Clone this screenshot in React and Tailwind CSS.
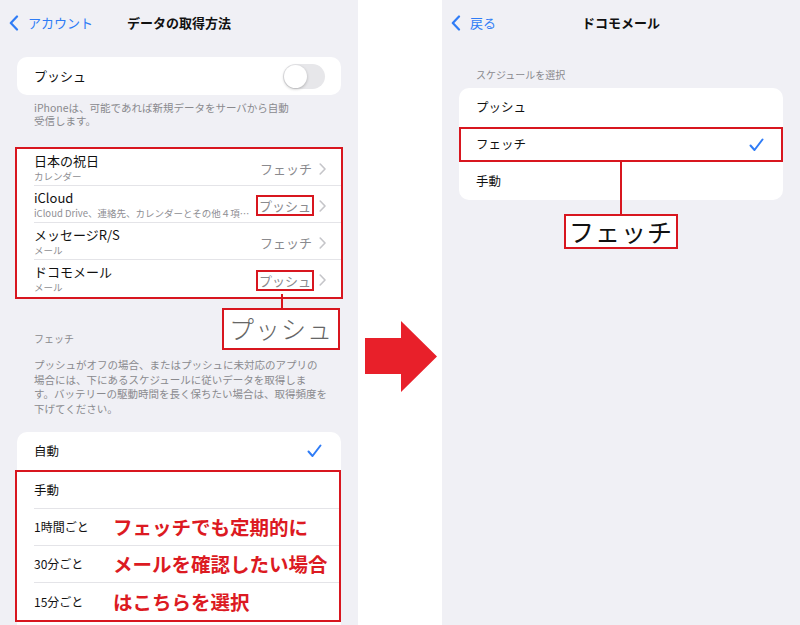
import React from 'react';

const font = { fontFamily: '"Noto Sans CJK JP", "Noto Sans", sans-serif' };

function BackChevron() {
  return (
    <svg width="10" height="16" viewBox="0 0 10 16" fill="none">
      <path d="M8 1.5L1.8 8L8 14.5" stroke="#2f7cf6" strokeWidth="2.2" strokeLinecap="round" strokeLinejoin="round" />
    </svg>
  );
}

function RowChevron() {
  return (
    <svg width="7" height="12" viewBox="0 0 7 12" fill="none">
      <path d="M1.2 1L6 6L1.2 11" stroke="#c5c5c9" strokeWidth="1.6" strokeLinecap="round" strokeLinejoin="round" />
    </svg>
  );
}

function Check() {
  return (
    <svg width="15" height="14" viewBox="0 0 15 14" fill="none">
      <path d="M1.5 7.5L5.5 12L13.5 1.5" stroke="#2f7cf6" strokeWidth="2" strokeLinecap="round" strokeLinejoin="round" />
    </svg>
  );
}

function Header({ back, title }) {
  return (
    <div className="grid grid-cols-[1fr_auto_1fr] items-center h-[46px]">
      <div className="flex items-center gap-[9px] pl-[9px] text-[13px] text-[#2f7cf6]">
        <BackChevron />
        <span>{back}</span>
      </div>
      <div className="text-[13px] font-bold text-[#111]">{title}</div>
      <div />
    </div>
  );
}

const accounts = [
  { title: '日本の祝日', sub: 'カレンダー', value: 'フェッチ' },
  { title: 'iCloud', sub: 'iCloud Drive、連絡先、カレンダーとその他４項目...', value: 'プッシュ', boxed: true },
  { title: 'メッセージR/S', sub: 'メール', value: 'フェッチ' },
  { title: 'ドコモメール', sub: 'メール', value: 'プッシュ', boxed: true, last: true },
];

const schedule = [
  { label: '1時間ごと', note: 'フェッチでも定期的に' },
  { label: '30分ごと', note: 'メールを確認したい場合' },
  { label: '15分ごと', note: 'はこちらを選択', last: true },
];

function LeftPanel() {
  return (
    <div className="w-[358px] h-[625px] bg-[#f0f0f5] overflow-hidden flex flex-col">
      <Header back="アカウント" title="データの取得方法" />

      <div className="mt-[11px] mx-[17px] h-[38px] bg-white rounded-[10px] flex items-center justify-between pl-[17px] pr-[16px]">
        <span className="text-[13px] text-[#111]">プッシュ</span>
        <div className="w-[42px] h-[25px] rounded-full bg-[#e7e7ea] p-[1px] flex items-center">
          <div className="w-[23px] h-[23px] rounded-full bg-white shadow-[0_1px_3px_rgba(0,0,0,0.25)]" />
        </div>
      </div>

      <p className="mt-[6px] px-[34px] text-[10.5px] leading-[13px] text-[#8a8a8e]">
        iPhoneは、可能であれば新規データをサーバから自動<br />受信します。
      </p>

      <div className="relative mt-[20px] mx-[15px] border-2 border-[#d8161f] bg-white">
        {accounts.map((a) => (
          <div key={a.title} className="pl-[17px]">
            <div className={`h-[37px] flex items-center pr-[15px] ${a.last ? '' : 'border-b border-[#e4e4e8]'}`}>
              <div className="flex-1 min-w-0 flex flex-col">
                <span className="text-[13px] leading-[17px] text-[#111]">{a.title}</span>
                <span className="text-[9.5px] leading-[14px] text-[#8e8e93] truncate">{a.sub}</span>
              </div>
              <span
                className={`text-[13px] leading-[17px] text-[#8a8a8e] mt-[3px] ${
                  a.boxed ? 'border-2 border-[#d8161f] px-[1px] -mr-[1px] bg-white' : 'pr-[1px]'
                }`}
              >
                {a.value}
              </span>
              <span className="ml-[6px] mt-[3px] flex items-center">
                <RowChevron />
              </span>
            </div>
          </div>
        ))}
        {/* callout for push */}
        <div className="absolute left-[264px] top-[145px] w-[2px] h-[14px] bg-[#d8161f]" />
        <div className="absolute left-[205px] top-[159px] w-[118px] h-[42px] border-2 border-[#d8161f] bg-white flex items-center justify-center">
          <span className="text-[25px] font-light text-[#666] tracking-[1px]">プッシュ</span>
        </div>
      </div>

      <div className="mt-[34px] px-[34px] text-[10px] leading-[12px] text-[#8a8a8e]">フェッチ</div>
      <p className="mt-[13px] pl-[34px] pr-[26px] text-[10.5px] leading-[14.5px] text-[#8a8a8e]">
        プッシュがオフの場合、またはプッシュに未対応のアプリの<br />
        場合には、下にあるスケジュールに従いデータを取得しま<br />
        す。バッテリーの駆動時間を長く保ちたい場合は、取得頻度を<br />
        下げてください。
      </p>

      <div className="mt-[16px] mx-[17px] bg-white rounded-t-[10px] flex-1 flex flex-col">
        <div className="h-[38px] flex items-center justify-between pl-[17px] pr-[19px]">
          <span className="text-[12.5px] text-[#111]">自動</span>
          <Check />
        </div>
        <div className="-ml-[2px] border-2 border-[#d8161f]">
          <div className="pl-[17px]">
            <div className="h-[37px] flex items-center border-b border-[#e4e4e8]">
              <span className="text-[12.5px] text-[#111]">手動</span>
            </div>
          </div>
          {schedule.map((s) => (
            <div key={s.label} className="pl-[17px]">
              <div className={`h-[37px] flex items-center ${s.last ? '' : 'border-b border-[#e4e4e8]'}`}>
                <span className="w-[79px] text-[12px] text-[#111]">{s.label}</span>
                <span className="text-[19.5px] font-bold text-[#dc1a22] leading-none">{s.note}</span>
              </div>
            </div>
          ))}
        </div>
      </div>
    </div>
  );
}

function RightPanel() {
  return (
    <div className="w-[358px] h-[625px] bg-[#f0f0f5] flex flex-col">
      <Header back="戻る" title="ドコモメール" />
      <div className="mt-[23px] px-[34px] text-[10px] leading-[12px] text-[#8a8a8e]">スケジュールを選択</div>
      <div className="relative mt-[7px] mx-[17px] bg-white rounded-[10px]">
        <div className="pl-[17px]">
          <div className="h-[39px] flex items-center">
            <span className="text-[12.5px] text-[#111]">プッシュ</span>
          </div>
        </div>
        <div className="h-[35px] border-2 border-[#d8161f] flex items-center justify-between pl-[15px] pr-[17px]">
          <span className="text-[12.5px] text-[#111]">フェッチ</span>
          <Check />
        </div>
        <div className="pl-[17px]">
          <div className="h-[38px] flex items-center">
            <span className="text-[12.5px] text-[#111]">手動</span>
          </div>
        </div>
        {/* callout for fetch */}
        <div className="absolute left-[161px] top-[74px] w-[2px] h-[52px] bg-[#d8161f]" />
        <div className="absolute left-[105px] top-[126px] w-[114px] h-[35px] border-2 border-[#d8161f] bg-white flex items-center justify-center">
          <span className="text-[25px] text-[#111] tracking-[1px]">フェッチ</span>
        </div>
      </div>
    </div>
  );
}

export default function App() {
  return (
    <div className="w-[800px] h-[625px] bg-white flex overflow-hidden" style={font}>
      <LeftPanel />
      <div className="w-[84px] pt-[321px] pl-[7px]">
        <svg width="72" height="71" viewBox="0 0 72 71">
          <polygon points="0,17 36,17 36,0 72,35.5 36,71 36,53 0,53" fill="#e8202a" />
        </svg>
      </div>
      <RightPanel />
    </div>
  );
}
